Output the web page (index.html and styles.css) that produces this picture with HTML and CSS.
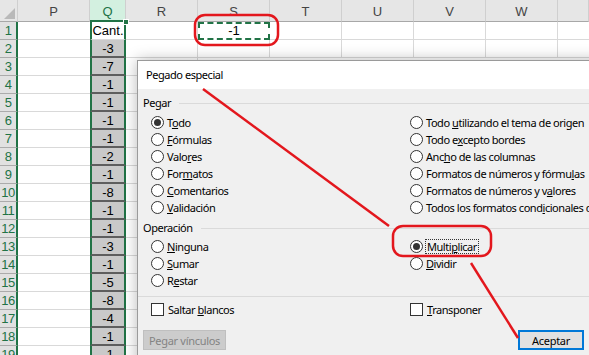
FILE: index.html
```html
<!DOCTYPE html>
<html lang="es">
<head>
<meta charset="utf-8">
<title>Pegado especial</title>
<link rel="stylesheet" href="styles.css">
</head>
<body>
<div class="sheet">
  <div class="row head">
    <div class="rh corner"><span class="tri"></span></div>
    <div class="c p">P</div><div class="c q">Q</div><div class="c r">R</div><div class="c s">S</div><div class="c w">T</div><div class="c w">U</div><div class="c w">V</div><div class="c w">W</div><div class="c f"></div>
  </div>
  <div class="row">
    <div class="rh">1</div>
    <div class="c p"></div><div class="c q q1">Cant.<span class="handle"></span></div><div class="c r"></div><div class="c s copy">-1</div><div class="c w"></div><div class="c w"></div><div class="c w"></div><div class="c w"></div><div class="c f"></div>
  </div>
  <div class="row">
    <div class="rh">2</div>
    <div class="c p"></div><div class="c q">-3</div><div class="c r"></div><div class="c s"></div><div class="c w"></div><div class="c w"></div><div class="c w"></div><div class="c w"></div><div class="c f"></div>
  </div>
  <div class="row"><div class="rh">3</div><div class="c p"></div><div class="c q">-7</div><div class="c r"></div><div class="c f"></div></div>
  <div class="row"><div class="rh">4</div><div class="c p"></div><div class="c q">-1</div><div class="c r"></div><div class="c f"></div></div>
  <div class="row"><div class="rh">5</div><div class="c p"></div><div class="c q">-1</div><div class="c r"></div><div class="c f"></div></div>
  <div class="row"><div class="rh">6</div><div class="c p"></div><div class="c q">-1</div><div class="c r"></div><div class="c f"></div></div>
  <div class="row"><div class="rh">7</div><div class="c p"></div><div class="c q">-1</div><div class="c r"></div><div class="c f"></div></div>
  <div class="row"><div class="rh">8</div><div class="c p"></div><div class="c q">-2</div><div class="c r"></div><div class="c f"></div></div>
  <div class="row"><div class="rh">9</div><div class="c p"></div><div class="c q">-1</div><div class="c r"></div><div class="c f"></div></div>
  <div class="row"><div class="rh">10</div><div class="c p"></div><div class="c q">-8</div><div class="c r"></div><div class="c f"></div></div>
  <div class="row"><div class="rh">11</div><div class="c p"></div><div class="c q">-1</div><div class="c r"></div><div class="c f"></div></div>
  <div class="row"><div class="rh">12</div><div class="c p"></div><div class="c q">-1</div><div class="c r"></div><div class="c f"></div></div>
  <div class="row"><div class="rh">13</div><div class="c p"></div><div class="c q">-3</div><div class="c r"></div><div class="c f"></div></div>
  <div class="row"><div class="rh">14</div><div class="c p"></div><div class="c q">-1</div><div class="c r"></div><div class="c f"></div></div>
  <div class="row"><div class="rh">15</div><div class="c p"></div><div class="c q">-5</div><div class="c r"></div><div class="c f"></div></div>
  <div class="row"><div class="rh">16</div><div class="c p"></div><div class="c q">-8</div><div class="c r"></div><div class="c f"></div></div>
  <div class="row"><div class="rh">17</div><div class="c p"></div><div class="c q">-4</div><div class="c r"></div><div class="c f"></div></div>
  <div class="row"><div class="rh">18</div><div class="c p"></div><div class="c q">-1</div><div class="c r"></div><div class="c f"></div></div>
  <div class="row"><div class="rh">19</div><div class="c p"></div><div class="c q">-1</div><div class="c r"></div><div class="c f"></div></div>

  <div class="dialog">
    <div class="title">Pegado especial</div>
    <div class="body">
      <div class="group">Pegar</div>
      <div class="opts">
        <div class="col">
          <div class="opt"><span class="radio on"></span><span class="lbl">T<u>o</u>do</span></div>
          <div class="opt"><span class="radio"></span><span class="lbl"><u>F</u>órmulas</span></div>
          <div class="opt"><span class="radio"></span><span class="lbl">Valo<u>r</u>es</span></div>
          <div class="opt"><span class="radio"></span><span class="lbl">For<u>m</u>atos</span></div>
          <div class="opt"><span class="radio"></span><span class="lbl"><u>C</u>omentarios</span></div>
          <div class="opt"><span class="radio"></span><span class="lbl"><u>V</u>alidación</span></div>
        </div>
        <div class="col">
          <div class="opt"><span class="radio"></span><span class="lbl">Todo <u>u</u>tilizando el tema de origen</span></div>
          <div class="opt"><span class="radio"></span><span class="lbl">Todo e<u>x</u>cepto bordes</span></div>
          <div class="opt"><span class="radio"></span><span class="lbl">Anc<u>h</u>o de las columnas</span></div>
          <div class="opt"><span class="radio"></span><span class="lbl">Formatos de números y fórmu<u>l</u>as</span></div>
          <div class="opt"><span class="radio"></span><span class="lbl">Formatos de números y v<u>a</u>lores</span></div>
          <div class="opt"><span class="radio"></span><span class="lbl">Todos los formatos cond<u>i</u>cionales de combinación</span></div>
        </div>
      </div>
      <div class="group op">Operación</div>
      <div class="opts">
        <div class="col">
          <div class="opt"><span class="radio"></span><span class="lbl"><u>N</u>inguna</span></div>
          <div class="opt"><span class="radio"></span><span class="lbl"><u>S</u>umar</span></div>
          <div class="opt"><span class="radio"></span><span class="lbl">R<u>e</u>star</span></div>
        </div>
        <div class="col">
          <div class="opt"><span class="radio on"></span><span class="lbl focus">Multi<u>p</u>licar</span></div>
          <div class="opt"><span class="radio"></span><span class="lbl"><u>D</u>ividir</span></div>
        </div>
      </div>
      <div class="sep"></div>
      <div class="opts checks">
        <div class="col"><div class="opt"><span class="check"></span><span class="lbl">Saltar <u>b</u>lancos</span></div></div>
        <div class="col"><div class="opt"><span class="check"></span><span class="lbl"><u>T</u>ransponer</span></div></div>
      </div>
      <div class="buttons">
        <button class="btn links" disabled>Pegar vínculos</button>
        <span class="spacer"></span>
        <button class="btn ok">Aceptar</button>
        <button class="btn">Cancelar</button>
      </div>
    </div>
  </div>

  <svg class="annot" width="589" height="355" viewBox="0 0 589 355">
    <rect x="195" y="15" width="83" height="30" rx="10" ry="10"/>
    <line x1="203" y1="89" x2="389" y2="226"/>
    <rect x="393" y="226" width="98" height="30" rx="10" ry="10"/>
    <line x1="471" y1="263" x2="518" y2="338"/>
  </svg>
</div>
</body>
</html>
```

FILE: styles.css
```css
* { box-sizing: border-box; }
html, body { margin: 0; padding: 0; background: #fff; }
body { width: 589px; height: 355px; overflow: hidden; }

.sheet {
  position: relative;
  width: 589px;
  height: 355px;
  overflow: hidden;
  font-family: "Liberation Sans", Arial, sans-serif;
  font-size: 13px;
  color: #000;
}

.row { display: flex; height: 18px; }
.row.head { height: 22px; }

.c {
  flex: none;
  height: 100%;
  border-right: 1px solid #d9d9d9;
  border-bottom: 1px solid #d9d9d9;
  text-align: center;
  line-height: 17px;
  position: relative;
}
.c.p { width: 72px; border-right: none; }
.c.q { width: 36px; border-left: 2px solid #217346; border-right: 2px solid #217346; background: #c9c9c9; border-bottom: 2px solid #5e5e5e; }
.c.r { width: 72px; }
.c.s { width: 72px; }
.c.w { width: 72px; }
.c.f { flex: 1; border-right: none; }

.rh {
  flex: none;
  width: 18px;
  height: 100%;
  background: #e1e1e1;
  color: #217346;
  border-right: 2px solid #217346;
  border-bottom: 1px solid #ababab;
  font-size: 13px;
  line-height: 17px;
  text-align: center;
  letter-spacing: -0.5px;
}

.head .c {
  background: #e6e6e6;
  color: #444;
  border-right: 1px solid #cfcfcf;
  border-bottom: 1px solid #a8a8a8;
  line-height: 22px;
  padding-top: 1px;
}
.head .c.q {
  background: #d3f0e0;
  color: #217346;
  border-left: none;
  border-right: 1px solid #cfcfcf;
  border-bottom: 2px solid #217346;
}
.head .corner {
  position: relative;
  background: #e6e6e6;
  border-right: 1px solid #cfcfcf;
  border-bottom: 1px solid #a8a8a8;
}
.tri {
  position: absolute;
  right: 2px;
  bottom: 2px;
  width: 0; height: 0;
  border-left: 11px solid transparent;
  border-bottom: 11px solid #b9b9b9;
}

.c.q1 { background: #fff; border-bottom: 1px solid #d9d9d9; }
.handle {
  position: absolute;
  right: -5px;
  top: -3px;
  width: 6px;
  height: 6px;
  background: #217346;
  border: 1px solid #fff;
}
.c.copy {
  border: 2px dashed #217346;
  line-height: 14px;
}

/* dialog */
.dialog {
  position: absolute;
  left: 137px;
  top: 60px;
  width: 532px;
  height: 320px;
  background: #f0f0f0;
  border: 1px solid #9a9a9a;
  box-shadow: 0 0 14px rgba(0, 0, 0, 0.28);
  font-family: "Noto Sans", "Open Sans", sans-serif;
  font-size: 11px;
  letter-spacing: -0.45px;
  color: #000;
}
.title {
  height: 28px;
  background: #fff;
  padding-left: 8px;
  line-height: 28px;
  font-size: 11px;
}
.body { padding: 7px 0 0 5px; }

.group {
  display: flex;
  align-items: center;
  height: 14px;
  line-height: 14px;
  margin-bottom: 4px;
}
.group::after {
  content: "";
  flex: 1;
  height: 1px;
  background: #dadada;
  margin-left: 8px;
}
.group.op { margin-top: 5px; margin-bottom: 3px; }

.opts { display: flex; padding-left: 8px; }
.col { width: 259px; flex: none; }
.col + .col { width: 260px; white-space: nowrap; }
.opt {
  display: flex;
  align-items: center;
  height: 17px;
  white-space: nowrap;
}
.lbl { white-space: pre; }
.radio {
  flex: none;
  width: 13px;
  height: 13px;
  border: 1px solid #333;
  border-radius: 50%;
  background: #fff;
  margin-right: 3px;
  position: relative;
}
.radio.on::after {
  content: "";
  position: absolute;
  left: 2px; top: 2px;
  width: 7px; height: 7px;
  border-radius: 50%;
  background: #333;
}
.check {
  flex: none;
  width: 13px;
  height: 13px;
  border: 1px solid #333;
  background: #fff;
  margin-right: 4px;
}
.focus {
  outline: 1px dotted #333;
  outline-offset: 0;
  padding: 0 1px;
  line-height: 13px;
}

.sep {
  height: 1px;
  background: #dadada;
  margin: 7px 0 4px -5px;
}

.buttons {
  display: flex;
  gap: 8px;
  margin-top: 12px;
  width: 515px;
}
.spacer { flex: 1; }
.btn {
  height: 20px;
  padding: 0;
  font-family: inherit;
  font-size: 11px;
  letter-spacing: -0.3px;
  background: #e1e1e1;
  border: 1px solid #adadad;
  color: #000;
}
.btn.links {
  width: 83px;
  background: #cccccc;
  border-color: #bfbfbf;
  color: #838383;
}
.btn.ok {
  width: 66px;
  border: 1px solid #0078d7;
  box-shadow: inset 0 0 0 1px #0078d7;
}
.btn:last-child { width: 66px; }

.annot {
  position: absolute;
  left: 0; top: 0;
  pointer-events: none;
}
.annot rect, .annot line {
  fill: none;
  stroke: #e3171d;
  stroke-width: 2.5;
}
```
